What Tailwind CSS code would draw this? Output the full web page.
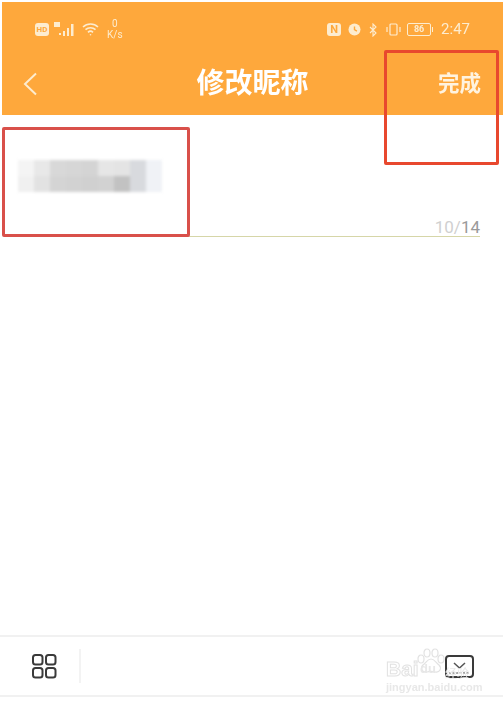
<!DOCTYPE html>
<html lang="en">
  <head>
    <meta charset="UTF-8" />
    <meta name="viewport" content="width=device-width, initial-scale=1.0" />
    <title>修改昵称</title>
    <script src="https://cdn.jsdelivr.net/npm/@tailwindcss/browser@4"></script>
  </head>
  <body class="bg-white">
    <main class="relative w-[503px] h-[702px] overflow-hidden bg-white flex flex-col font-['Roboto','Noto_Sans_CJK_SC',sans-serif]">
      <!-- Orange header -->
      <header class="mt-[2px] ml-[2px] h-[113px] bg-[#fea83c] flex flex-col text-white">
        <!-- Status bar -->
        <div class="h-[38px] pt-[17px] pl-[33px] pr-[33px] flex items-center justify-between text-[#fdeccf] blur-[0.5px]">
          <div class="flex items-center">
            <span class="w-[14px] h-[13px] rounded-[3px] bg-[#fdeccf] text-[#fea83c] text-[8px] font-bold leading-[13px] text-center">HD</span>
            <svg class="ml-[5px]" width="22" height="16" viewBox="0 0 22 16" fill="currentColor">
              <rect x="0" y="0" width="6" height="5" />
              <rect x="5" y="11" width="2" height="2" />
              <rect x="9" y="9" width="2" height="5" />
              <rect x="13" y="6" width="2" height="8" />
              <rect x="17" y="2" width="2.5" height="12" />
            </svg>
            <svg class="ml-[6px]" width="17" height="15" viewBox="0 0 17 14" fill="none" stroke="currentColor" stroke-width="1.6">
              <path d="M1 4.5a11 11 0 0 1 15 0" />
              <path d="M3.5 7.2a7.4 7.4 0 0 1 10 0" />
              <path d="M6 9.8a3.6 3.6 0 0 1 5 0" />
              <circle cx="8.5" cy="12.3" r="0.8" fill="currentColor" stroke="none" />
            </svg>
            <div class="ml-[8px] flex flex-col items-center text-[10px] leading-[11px] -mt-[1px]">
              <span>0</span>
              <span>K/s</span>
            </div>
          </div>
          <div class="flex items-center">
            <span class="w-[14px] h-[13px] rounded-[3px] bg-[#fdeccf] text-[#fea83c] text-[11px] font-bold leading-[13px] text-center">N</span>
            <svg class="ml-[7px]" width="13" height="13" viewBox="0 0 13 13">
              <circle cx="6.5" cy="6.5" r="6" fill="currentColor" />
              <path d="M6.5 3.5v3.2l2.4 1.4" fill="none" stroke="#fea83c" stroke-width="1.4" />
            </svg>
            <svg class="ml-[8px]" width="8" height="14" viewBox="0 0 8 14" fill="none" stroke="currentColor" stroke-width="1.1">
              <path d="M1 4l6 6-3 3V1l3 3-6 6" />
            </svg>
            <svg class="ml-[9px]" width="15" height="13" viewBox="0 0 15 13" fill="none" stroke="currentColor" stroke-width="1.2">
              <rect x="4" y="1" width="7" height="11" rx="1" />
              <path d="M1 4v5M14 4v5" />
            </svg>
            <div class="ml-[6px] w-[24px] h-[13px] border border-current rounded-[2px] text-[9px] leading-[11px] font-bold text-center">86</div>
            <span class="ml-[1px] w-[1px] h-[5px] bg-current"></span>
            <span class="ml-[8px] text-[15px] leading-none">2:47</span>
          </div>
        </div>
        <!-- Nav bar -->
        <div class="relative flex-1 flex items-center justify-between pl-[20px] pr-[22px] pt-[12px]">
          <svg width="16" height="24" viewBox="0 0 16 24" fill="none" stroke="#fdeccf" stroke-width="2">
            <path d="M14 1.5 3 12l11 10.5" />
          </svg>
          <h1 class="absolute left-0 right-0 text-center text-[28px] leading-none font-bold">修改昵称</h1>
          <span class="text-[#fff3df] text-[21.5px] leading-none font-bold">完成</span>
        </div>
      </header>

      <!-- Nickname field -->
      <section class="mt-[45px] ml-[24px] mr-[23px] h-[77px] border-b border-[#d6d6a8] flex flex-col justify-between">
        <div class="-ml-[6px] w-[144px] h-[32px] grid grid-cols-9 grid-rows-2 blur-[1.5px]">
          <div class="bg-[#f4f4f4]"></div>
          <div class="bg-[#e8e8e8]"></div>
          <div class="bg-[#d8d8d8]"></div>
          <div class="bg-[#d6d6d6]"></div>
          <div class="bg-[#d4d4d4]"></div>
          <div class="bg-[#e6e6e6]"></div>
          <div class="bg-[#e4e4e4]"></div>
          <div class="bg-[#d8dade]"></div>
          <div class="bg-[#f0f2f6]"></div>
          <div class="bg-[#f0f0f0]"></div>
          <div class="bg-[#e2e2e2]"></div>
          <div class="bg-[#d4d4d4]"></div>
          <div class="bg-[#d2d2d2]"></div>
          <div class="bg-[#d0d0d0]"></div>
          <div class="bg-[#d2d2d2]"></div>
          <div class="bg-[#c2c2c2]"></div>
          <div class="bg-[#d8dade]"></div>
          <div class="bg-[#f0f2f6]"></div>
        </div>
        <div class="text-right text-[17px] leading-none text-[#d0d0d0]">10/<span class="text-[#9a9a9a]">14</span></div>
      </section>

      <div class="flex-1"></div>

      <!-- Bottom toolbar -->
      <footer class="h-[62px] mb-[5px] border-y-2 border-[#f1f1f1] flex items-center pl-[32px] pr-[29px]">
        <svg width="25" height="25" viewBox="0 0 25 25" fill="none" stroke="#3a3a3a" stroke-width="2">
          <rect x="1" y="1" width="9.5" height="9.5" rx="2.5" />
          <rect x="14" y="1" width="9.5" height="9.5" rx="2.5" />
          <rect x="1" y="14" width="9.5" height="9.5" rx="2.5" />
          <rect x="14" y="14" width="9.5" height="9.5" rx="2.5" />
        </svg>
        <span class="ml-[22px] w-[2px] h-[34px] bg-[#f3f3f3]"></span>
        <svg class="ml-auto" width="29" height="23" viewBox="0 0 29 23" fill="none">
          <rect x="1" y="1" width="27" height="21" rx="3" stroke="#3a3a3a" stroke-width="2" />
          <path d="m9 8 5.5 5L20 8" stroke="#555" stroke-width="1.5" />
          <path d="M4 18h21" stroke="#888" stroke-width="1.5" stroke-dasharray="2 1.5" />
        </svg>
      </footer>

      <!-- Red annotation boxes -->
      <div class="absolute left-[384px] top-[50px] w-[115px] h-[115px] border-[3px] border-[#e8482e] rounded-[2px]"></div>
      <div class="absolute left-[2px] top-[127px] w-[188px] h-[110px] border-[3px] border-[#d9504a] rounded-[2px]"></div>

      <!-- Watermark -->
      <div class="absolute left-[386px] top-[648px] w-[90px] h-[44px] text-[#e8e8e8] font-['Liberation_Sans',sans-serif] blur-[0.4px]">
        <svg class="absolute left-[30px] top-0" width="30" height="26" viewBox="0 0 30 26" fill="none" stroke="#e2e2e2" stroke-width="1.2">
          <ellipse cx="5" cy="11" rx="3" ry="4" />
          <ellipse cx="11" cy="5" rx="3" ry="4" />
          <ellipse cx="19" cy="5" rx="3" ry="4" />
          <ellipse cx="25" cy="11" rx="3" ry="4" />
          <path d="M15 11c-4 0-5 4-8 6-3 3-1 8 4 7 3-1 5-1 8 0 5 1 7-4 4-7-3-2-4-6-8-6z" />
        </svg>
        <span class="absolute left-0 top-[10px] text-[21px] leading-[22px] font-bold text-transparent [-webkit-text-stroke:1px_#e2e2e2]">Bai</span>
        <span class="absolute left-[34px] top-[14px] text-[13px] leading-[14px] font-bold">du</span>
        <span class="absolute left-[59px] top-[18px] text-[12px] leading-[13px] font-['Noto_Sans_CJK_SC',sans-serif]">经验</span>
        <span class="absolute left-0 top-[33px] text-[11px] leading-[12px] font-bold whitespace-nowrap">jingyan.baidu.com</span>
      </div>
    </main>
  </body>
</html>
